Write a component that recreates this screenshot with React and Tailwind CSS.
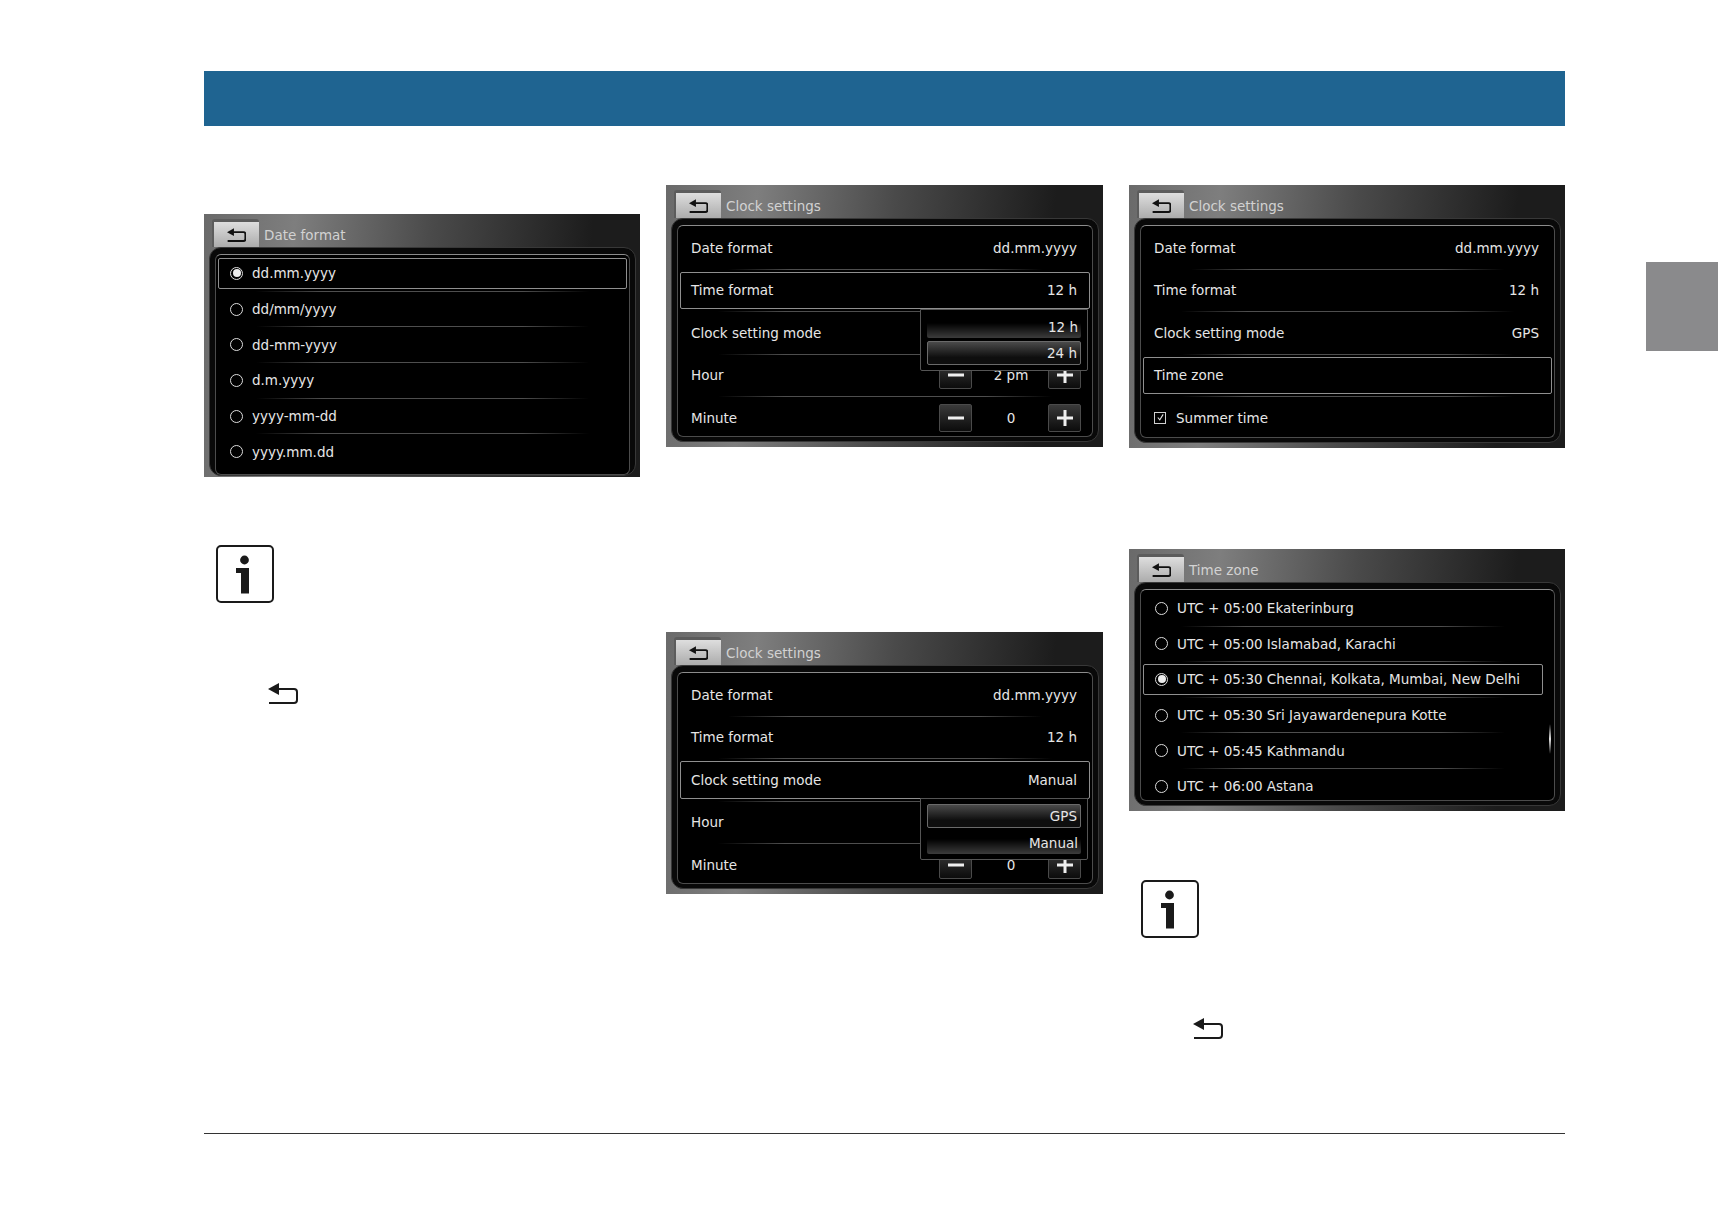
// App.jsx
// Manual page: clock settings screens for a car navigation unit
import React from 'react';

const BackIcon = ({ className = '', weight = 2 }) => (
  <svg viewBox="0 0 30 21" className={className} fill="none">
    <path d="M0 6 L11 0 V12 Z" fill="currentColor" />
    <path d="M10 6 H26 Q29 6 29 9 V17 Q29 20 26 20 H1" stroke="currentColor" strokeWidth={weight} />
  </svg>
);

const InfoIcon = () => (
  <svg viewBox="0 0 58 58" className="w-[58px] h-[58px] text-[#1a1a1a]" fill="none">
    <rect x="1" y="1" width="56" height="56" rx="4" stroke="currentColor" strokeWidth="2" />
    <circle cx="28.5" cy="15" r="4.4" fill="currentColor" />
    <path d="M20 23 H33 V48.5 H25 V28 H20 Z" fill="currentColor" />
  </svg>
);

const Radio = ({ checked }) => (
  <span className="w-[13px] h-[13px] shrink-0 rounded-full border-[1.5px] border-[#dcdcdc] flex items-center justify-center">
    {checked && <span className="w-[8px] h-[8px] rounded-full bg-[#ececec]" />}
  </span>
);

const Separator = ({ inset = 'mx-[40px]' }) => (
  <div className={`h-px shrink-0 bg-[linear-gradient(90deg,transparent,#4e4e4e_20%,#4e4e4e_80%,transparent)] ${inset}`} />
);

// One row of a list; selected rows get the thin light frame
const Row = ({ selected, height, pad = 'pl-[11px] pr-[10px]', children }) => (
  <div className={`mx-[2px] py-[2px] shrink-0 ${height}`}>
    <div
      className={`h-full flex items-center justify-between border rounded-[2px] ${pad} ${
        selected ? 'border-[#8f8f8f]' : 'border-transparent'
      }`}
    >
      {children}
    </div>
  </div>
);

const StepButton = ({ plus }) => (
  <span className="w-[33px] h-[28px] flex items-center justify-center border border-[#4a4a4a] rounded-[2px] bg-gradient-to-b from-[#3a3a3a] to-[#0c0c0c]">
    <svg viewBox="0 0 16 16" className="w-[16px] h-[16px] text-[#efefef]" fill="currentColor">
      <rect x="0" y="6.5" width="16" height="3" />
      {plus && <rect x="6.5" y="0" width="3" height="16" />}
    </svg>
  </span>
);

const Stepper = ({ value }) => (
  <div className="flex items-center -mr-[4px]">
    <StepButton />
    <span className="w-[76px] pl-[2px] text-center">{value}</span>
    <StepButton plus />
  </div>
);

// open: the panel runs down to the bottom edge of the screen (Date format only)
const Screen = ({ title, height = 'h-[262px]', open, children }) => (
  <div className={`relative w-full flex flex-col text-[13.5px] text-[#e6e6e6] font-['DejaVu_Sans',sans-serif] overflow-hidden bg-[linear-gradient(95deg,#6a6a6a_0%,#7e7e7e_20%,#4a4a4a_50%,#1c1c1c_85%)] ${height}`}>
    <div className="h-[33px] shrink-0 flex items-end gap-[5px] pl-[8px]">
      <div className="w-[47px] h-[28px] flex items-center justify-center border-t-[3px] border-l-2 border-[#5c5c5c] rounded-t-[3px] bg-gradient-to-b from-[#dedede] to-[#acacac] text-[#111111]">
        <BackIcon className="w-[19px] h-[14px]" weight={3} />
      </div>
      <span className="pb-[2px] text-[#d2d2d2]">{title}</span>
    </div>
    <div className={`flex-1 min-h-0 ml-[5px] mr-[4px] pt-[6px] px-[5px] rounded-[12px] border border-[#383838] bg-[#090909] flex ${open ? 'mb-[1px]' : 'mb-[5px]'}`}>
      <div className={`flex-1 flex flex-col rounded-[6px] border border-[#4c4c4c] border-t-[#8c8c8c] bg-black overflow-hidden ${open ? '' : 'mb-[4px]'}`}>
        {children}
      </div>
    </div>
  </div>
);

// Drop-down that sits over the lower rows
const Popup = ({ place, items, active }) => (
  <div
    className={`absolute left-[254px] w-[168px] h-[62px] px-[6px] border border-[#555555] rounded-b-[2px] bg-black flex flex-col ${place}`}
  >
    {items.map((item) => (
      <div
        key={item}
        className={`pr-[3px] flex items-center justify-end rounded-[2px] ${
          item === active
            ? 'h-[24px] border border-[#6a6a6a] bg-[linear-gradient(180deg,#4a4a4a,#0e0e0e_70%)]'
            : 'h-[20px] pb-[2px] bg-[linear-gradient(180deg,#000000_25%,#3c3c3c)]'
        }`}
      >
        {item}
      </div>
    ))}
  </div>
);

const clockPad = 'pl-[10px] pr-[12px]';

const ClockRows = ({ selected, mode, zone, hideHour }) => {
  const h = 'h-[41.4px]';
  return (
    <div className="pt-[1.5px] flex flex-col">
      <Row height={h} pad={clockPad}>
        <span>Date format</span>
        <span>dd.mm.yyyy</span>
      </Row>
      <Separator inset="mx-[50px]" />
      <Row height={h} pad={clockPad} selected={selected === 'time'}>
        <span>Time format</span>
        <span>12 h</span>
      </Row>
      <Separator />
      <Row height={h} pad={clockPad} selected={selected === 'mode'}>
        <span>Clock setting mode</span>
        {mode && <span>{mode}</span>}
      </Row>
      <Separator />
      {zone ? (
        <>
          <Row height={h} pad={clockPad} selected>
            <span>Time zone</span>
          </Row>
          <Separator />
          <Row height={h} pad={clockPad}>
            <span className="flex items-center gap-[10px]">
              <span className="w-[12px] h-[12px] border border-[#d0d0d0] flex items-center justify-center">
                <svg viewBox="0 0 10 10" className="w-[9px] h-[9px]" fill="none" stroke="#e0e0e0" strokeWidth="1.2">
                  <path d="M2 5 L4.2 7.6 L8 1.5" />
                </svg>
              </span>
              Summer time
            </span>
          </Row>
        </>
      ) : (
        <>
          <Row height={h} pad={clockPad}>
            <span>Hour</span>
            {!hideHour && <Stepper value="2 pm" />}
          </Row>
          <Separator />
          <Row height={h} pad={clockPad}>
            <span>Minute</span>
            <Stepper value="0" />
          </Row>
        </>
      )}
    </div>
  );
};

const RadioList = ({ items, active, height, className = '' }) => (
  <div className={`pt-[1px] flex flex-col ${className}`}>
    {items.map((item, i) => (
      <React.Fragment key={item}>
        <Row height={height} selected={item === active}>
          <span className="flex items-center gap-[9px] whitespace-nowrap">
            <Radio checked={item === active} />
            {item}
          </span>
        </Row>
        {i < items.length - 1 && <Separator />}
      </React.Fragment>
    ))}
  </div>
);

const dateFormats = ['dd.mm.yyyy', 'dd/mm/yyyy', 'dd-mm-yyyy', 'd.m.yyyy', 'yyyy-mm-dd', 'yyyy.mm.dd'];

const timeZones = [
  'UTC + 05:00 Ekaterinburg',
  'UTC + 05:00 Islamabad, Karachi',
  'UTC + 05:30 Chennai, Kolkata, Mumbai, New Delhi',
  'UTC + 05:30 Sri Jayawardenepura Kotte',
  'UTC + 05:45 Kathmandu',
  'UTC + 06:00 Astana',
];

export default function App() {
  return (
    <div className="relative h-[1225px] w-full bg-white pl-[204px] pr-[153px] pt-[71px] pb-[91px] flex flex-col">
      {/* Chapter tab on the page edge */}
      <div className="absolute right-0 top-[262px] w-[72px] h-[89px] bg-[#8a8a8c]" />

      <div className="h-[55px] shrink-0 bg-[#1f6491]" />

      <div className="flex-1 mt-[59px] flex gap-[26px]">
        <div className="w-[436px] pt-[29px]">
          <Screen title="Date format" height="h-[263px]" open>
            <RadioList items={dateFormats} active="dd.mm.yyyy" height="h-[34.7px]" />
          </Screen>
          <div className="mt-[68px] ml-[12px]">
            <InfoIcon />
          </div>
          <BackIcon className="mt-[80px] ml-[64px] w-[30px] h-[21px] text-[#1a1a1a]" />
        </div>

        <div className="w-[437px] flex flex-col gap-[185px]">
          <Screen title="Clock settings">
            <ClockRows selected="time" />
            <Popup place="top-[124px] pt-[8px] gap-[3px]" items={['12 h', '24 h']} active="24 h" />
          </Screen>
          <Screen title="Clock settings">
            <ClockRows selected="mode" mode="Manual" hideHour />
            <Popup place="top-[166px] pt-[5px] gap-[6px]" items={['GPS', 'Manual']} active="GPS" />
          </Screen>
        </div>

        <div className="w-[436px]">
          <Screen title="Clock settings" height="h-[263px]">
            <ClockRows mode="GPS" zone />
          </Screen>
          <div className="mt-[101px]">
            <Screen title="Time zone">
              <RadioList items={timeZones} active={timeZones[2]} height="h-[34.6px]" className="pr-[9px]" />
              {/* scrollbar thumb */}
              <div className="absolute left-[420px] top-[175px] w-[2px] h-[30px] rounded-full bg-gradient-to-b from-transparent via-[#e4e4e4] to-transparent" />
            </Screen>
          </div>
          <div className="mt-[69px] ml-[12px]">
            <InfoIcon />
          </div>
          <BackIcon className="mt-[80px] ml-[64px] w-[30px] h-[21px] text-[#1a1a1a]" />
        </div>
      </div>

      <div className="h-px shrink-0 bg-[#333333]" />
    </div>
  );
}
